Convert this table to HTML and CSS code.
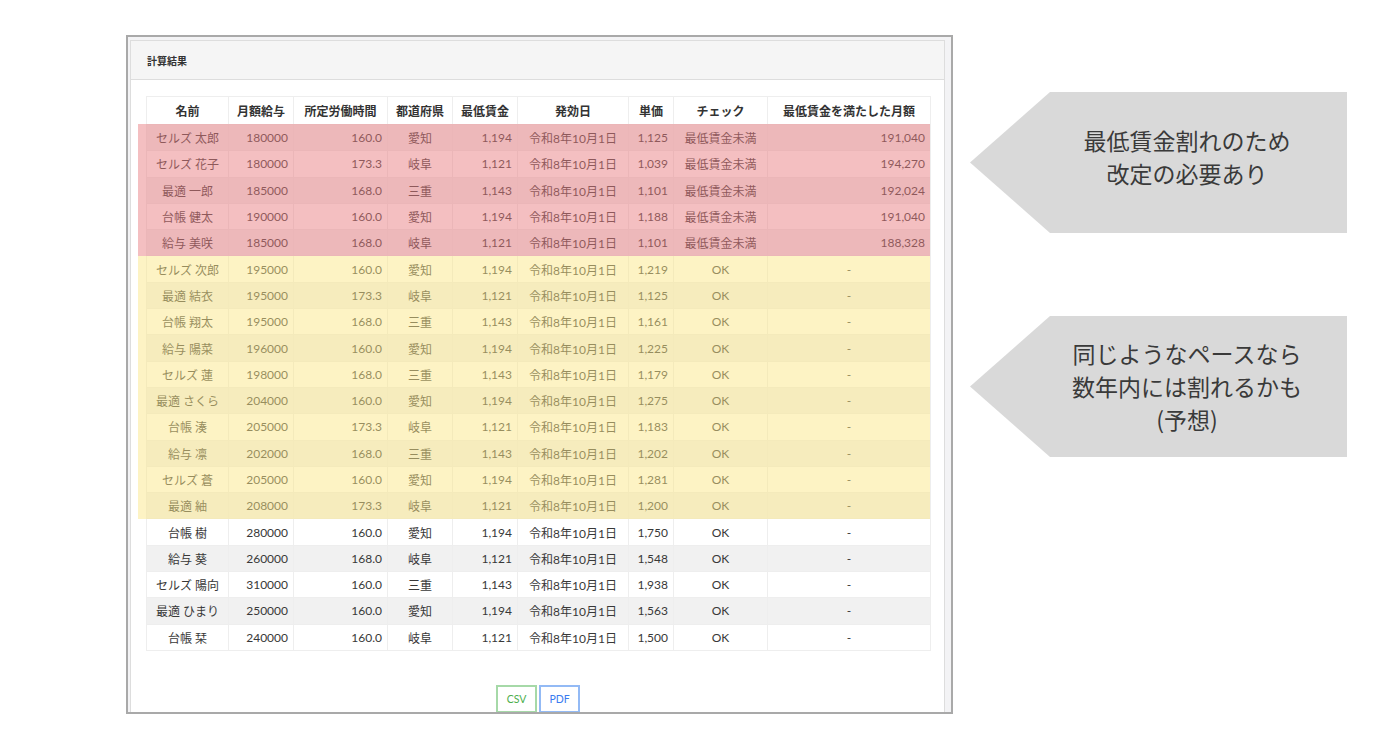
FILE: index.html
```html
<!DOCTYPE html>
<html lang="ja">
<head>
<meta charset="utf-8">
<title>計算結果</title>
<link rel="stylesheet" href="styles.css">
</head>
<body>
<div class="slide">
  <div class="frame">
    <div class="card">
      <div class="card-header">計算結果</div>
      <div class="card-body">
        <div class="table-wrap">
          <table class="result">
            <colgroup>
              <col class="w-name"><col class="w-salary"><col class="w-hours"><col class="w-pref"><col class="w-min">
              <col class="w-date"><col class="w-unit"><col class="w-check"><col class="w-need">
            </colgroup>
            <thead>
              <tr><th>名前</th><th>月額給与</th><th>所定労働時間</th><th>都道府県</th><th>最低賃金</th><th>発効日</th><th>単価</th><th>チェック</th><th>最低賃金を満たした月額</th></tr>
            </thead>
            <tbody>
              <tr><td class="c">セルズ 太郎</td><td class="r">180000</td><td class="r">160.0</td><td class="c">愛知</td><td class="r">1,194</td><td class="c">令和8年10月1日</td><td class="r">1,125</td><td class="c">最低賃金未満</td><td class="r">191,040</td></tr>
              <tr><td class="c">セルズ 花子</td><td class="r">180000</td><td class="r">173.3</td><td class="c">岐阜</td><td class="r">1,121</td><td class="c">令和8年10月1日</td><td class="r">1,039</td><td class="c">最低賃金未満</td><td class="r">194,270</td></tr>
              <tr><td class="c">最適 一郎</td><td class="r">185000</td><td class="r">168.0</td><td class="c">三重</td><td class="r">1,143</td><td class="c">令和8年10月1日</td><td class="r">1,101</td><td class="c">最低賃金未満</td><td class="r">192,024</td></tr>
              <tr><td class="c">台帳 健太</td><td class="r">190000</td><td class="r">160.0</td><td class="c">愛知</td><td class="r">1,194</td><td class="c">令和8年10月1日</td><td class="r">1,188</td><td class="c">最低賃金未満</td><td class="r">191,040</td></tr>
              <tr><td class="c">給与 美咲</td><td class="r">185000</td><td class="r">168.0</td><td class="c">岐阜</td><td class="r">1,121</td><td class="c">令和8年10月1日</td><td class="r">1,101</td><td class="c">最低賃金未満</td><td class="r">188,328</td></tr>
              <tr><td class="c">セルズ 次郎</td><td class="r">195000</td><td class="r">160.0</td><td class="c">愛知</td><td class="r">1,194</td><td class="c">令和8年10月1日</td><td class="r">1,219</td><td class="c">OK</td><td class="c">-</td></tr>
              <tr><td class="c">最適 結衣</td><td class="r">195000</td><td class="r">173.3</td><td class="c">岐阜</td><td class="r">1,121</td><td class="c">令和8年10月1日</td><td class="r">1,125</td><td class="c">OK</td><td class="c">-</td></tr>
              <tr><td class="c">台帳 翔太</td><td class="r">195000</td><td class="r">168.0</td><td class="c">三重</td><td class="r">1,143</td><td class="c">令和8年10月1日</td><td class="r">1,161</td><td class="c">OK</td><td class="c">-</td></tr>
              <tr><td class="c">給与 陽菜</td><td class="r">196000</td><td class="r">160.0</td><td class="c">愛知</td><td class="r">1,194</td><td class="c">令和8年10月1日</td><td class="r">1,225</td><td class="c">OK</td><td class="c">-</td></tr>
              <tr><td class="c">セルズ 蓮</td><td class="r">198000</td><td class="r">168.0</td><td class="c">三重</td><td class="r">1,143</td><td class="c">令和8年10月1日</td><td class="r">1,179</td><td class="c">OK</td><td class="c">-</td></tr>
              <tr><td class="c">最適 さくら</td><td class="r">204000</td><td class="r">160.0</td><td class="c">愛知</td><td class="r">1,194</td><td class="c">令和8年10月1日</td><td class="r">1,275</td><td class="c">OK</td><td class="c">-</td></tr>
              <tr><td class="c">台帳 湊</td><td class="r">205000</td><td class="r">173.3</td><td class="c">岐阜</td><td class="r">1,121</td><td class="c">令和8年10月1日</td><td class="r">1,183</td><td class="c">OK</td><td class="c">-</td></tr>
              <tr><td class="c">給与 凛</td><td class="r">202000</td><td class="r">168.0</td><td class="c">三重</td><td class="r">1,143</td><td class="c">令和8年10月1日</td><td class="r">1,202</td><td class="c">OK</td><td class="c">-</td></tr>
              <tr><td class="c">セルズ 蒼</td><td class="r">205000</td><td class="r">160.0</td><td class="c">愛知</td><td class="r">1,194</td><td class="c">令和8年10月1日</td><td class="r">1,281</td><td class="c">OK</td><td class="c">-</td></tr>
              <tr><td class="c">最適 紬</td><td class="r">208000</td><td class="r">173.3</td><td class="c">岐阜</td><td class="r">1,121</td><td class="c">令和8年10月1日</td><td class="r">1,200</td><td class="c">OK</td><td class="c">-</td></tr>
              <tr><td class="c">台帳 樹</td><td class="r">280000</td><td class="r">160.0</td><td class="c">愛知</td><td class="r">1,194</td><td class="c">令和8年10月1日</td><td class="r">1,750</td><td class="c">OK</td><td class="c">-</td></tr>
              <tr><td class="c">給与 葵</td><td class="r">260000</td><td class="r">168.0</td><td class="c">岐阜</td><td class="r">1,121</td><td class="c">令和8年10月1日</td><td class="r">1,548</td><td class="c">OK</td><td class="c">-</td></tr>
              <tr><td class="c">セルズ 陽向</td><td class="r">310000</td><td class="r">160.0</td><td class="c">三重</td><td class="r">1,143</td><td class="c">令和8年10月1日</td><td class="r">1,938</td><td class="c">OK</td><td class="c">-</td></tr>
              <tr><td class="c">最適 ひまり</td><td class="r">250000</td><td class="r">160.0</td><td class="c">愛知</td><td class="r">1,194</td><td class="c">令和8年10月1日</td><td class="r">1,563</td><td class="c">OK</td><td class="c">-</td></tr>
              <tr><td class="c">台帳 栞</td><td class="r">240000</td><td class="r">160.0</td><td class="c">岐阜</td><td class="r">1,121</td><td class="c">令和8年10月1日</td><td class="r">1,500</td><td class="c">OK</td><td class="c">-</td></tr>
            </tbody>
          </table>
          <div class="hl hl-red"></div>
          <div class="hl hl-yellow"></div>
        </div>
        <div class="exports">
          <button class="btn btn-csv">CSV</button>
          <button class="btn btn-pdf">PDF</button>
        </div>
      </div>
    </div>
  </div>
  <div class="notes">
    <div class="callout callout-first"><p>最低賃金割れのため<br>改定の必要あり</p></div>
    <div class="callout"><p>同じようなペースなら<br>数年内には割れるかも<br>(予想)</p></div>
  </div>
</div>
</body>
</html>
```

FILE: styles.css
```css
html, body {
  margin: 0;
  padding: 0;
  background: #ffffff;
}

body {
  font-family: Lato, "Noto Sans CJK JP", sans-serif;
  color: #333333;
}

.slide {
  display: flex;
  align-items: flex-start;
  padding: 35px 0 0 126px;
}

.frame {
  width: 827px;
  height: 679px;
  box-sizing: border-box;
  border: 2px solid #a9a9a9;
  padding: 3px 6px 0 2px;
  background: #f3f3f5;
  overflow: hidden;
  flex: none;
}

.card {
  background: #ffffff;
  border: 1px solid #dddddd;
  border-bottom: none;
  height: 720px;
}

.card-header {
  height: 38px;
  padding: 0 16px;
  background: #f5f5f5;
  border-bottom: 1px solid #dddddd;
  display: flex;
  align-items: center;
  font-size: 10px;
  font-weight: bold;
  color: #333333;
}

.card-body {
  padding: 16px 14px 0 15px;
}

.table-wrap {
  position: relative;
}

.result {
  width: 784px;
  border-collapse: collapse;
  table-layout: fixed;
  font-size: 12px;
  color: #383838;
}

.w-name { width: 82px; }
.w-salary { width: 65px; }
.w-hours { width: 94px; }
.w-pref { width: 65px; }
.w-min { width: 65px; }
.w-date { width: 111px; }
.w-unit { width: 45px; }
.w-check { width: 94px; }
.w-need { width: 163px; }

.result th,
.result td {
  border: 1px solid #eeeeee;
  padding: 0 5px;
  white-space: nowrap;
  overflow: hidden;
}

.result th {
  height: 27px;
  font-weight: bold;
  text-align: center;
  color: #333333;
}

.result td {
  height: 25.3px;
}

.result tbody tr:nth-child(odd) {
  background: #f1f1f1;
}

.result .c { text-align: center; }
.result .r { text-align: right; }

.hl {
  position: absolute;
  left: -8px;
  right: 0;
}

.hl-red {
  top: 28px;
  height: 132px;
  background: rgba(233, 124, 128, 0.49);
}

.hl-yellow {
  top: 160px;
  height: 263px;
  background: rgba(251, 230, 135, 0.49);
}

.exports {
  display: flex;
  justify-content: center;
  gap: 2px;
  margin-top: 34px;
}

.btn {
  width: 41px;
  height: 28px;
  padding: 0;
  background: #ffffff;
  font-family: Lato, sans-serif;
  font-size: 10.5px;
  border: 2px solid;
  border-radius: 0;
}

.btn-csv {
  border-color: #a6d9a8;
  color: #4cae4c;
}

.btn-pdf {
  border-color: #93baf5;
  color: #3b7cf0;
}

.notes {
  margin-left: 17px;
  padding-top: 57px;
  display: flex;
  flex-direction: column;
  gap: 83px;
}

.callout {
  width: 377px;
  height: 141px;
  box-sizing: border-box;
  padding-left: 57px;
  background: #d9d9d9;
  clip-path: polygon(0 50%, 80px 0, 100% 0, 100% 100%, 80px 100%);
  display: flex;
  align-items: center;
  justify-content: center;
  text-align: center;
  font-family: "Noto Sans CJK JP", sans-serif;
  font-size: 23px;
  line-height: 33px;
  color: #3a3a3a;
}

.callout-first {
  padding-bottom: 12px;
}

.callout p {
  margin: 0;
}
```
